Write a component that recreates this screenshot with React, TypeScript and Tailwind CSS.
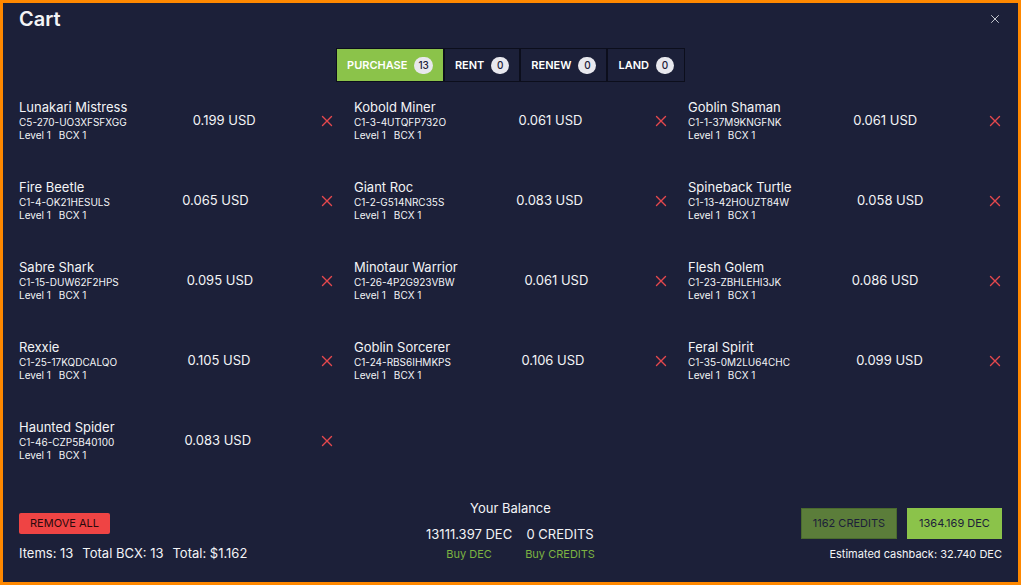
import React from 'react';
import { X } from 'lucide-react';

type CartItem = { name: string; uid: string; price: string };

const ITEMS: CartItem[] = [
  { name: 'Lunakari Mistress', uid: 'C5-270-UO3XFSFXGG', price: '0.199' },
  { name: 'Kobold Miner', uid: 'C1-3-4UTQFP732O', price: '0.061' },
  { name: 'Goblin Shaman', uid: 'C1-1-37M9KNGFNK', price: '0.061' },
  { name: 'Fire Beetle', uid: 'C1-4-OK21HESULS', price: '0.065' },
  { name: 'Giant Roc', uid: 'C1-2-G514NRC35S', price: '0.083' },
  { name: 'Spineback Turtle', uid: 'C1-13-42HOUZT84W', price: '0.058' },
  { name: 'Sabre Shark', uid: 'C1-15-DUW62F2HPS', price: '0.095' },
  { name: 'Minotaur Warrior', uid: 'C1-26-4P2G923VBW', price: '0.061' },
  { name: 'Flesh Golem', uid: 'C1-23-ZBHLEHI3JK', price: '0.086' },
  { name: 'Rexxie', uid: 'C1-25-17KQDCALQO', price: '0.105' },
  { name: 'Goblin Sorcerer', uid: 'C1-24-RBS6IHMKPS', price: '0.106' },
  { name: 'Feral Spirit', uid: 'C1-35-0M2LU64CHC', price: '0.099' },
  { name: 'Haunted Spider', uid: 'C1-46-CZP5B40100', price: '0.083' },
];

const TABS = [
  { label: 'PURCHASE', count: 13, active: true },
  { label: 'RENT', count: 0, active: false },
  { label: 'RENEW', count: 0, active: false },
  { label: 'LAND', count: 0, active: false },
];

const RemoveIcon = () => (
  <svg width="12" height="12" viewBox="0 0 12 12" className="mr-[1px] shrink-0">
    <path d="M1.5 1.5 L10.5 10.5 M10.5 1.5 L1.5 10.5" stroke="#e5484d" strokeWidth="1.4" strokeLinecap="round" />
  </svg>
);

export default function App() {
  return (
    <div
      className="w-[1021px] h-[585px] border-[3px] border-[#ff8800] bg-[#1c2039] text-[#f3f4f6] flex flex-col px-[16px] pt-[2px] pb-[20px]"
      style={{ fontFamily: 'Inter, "Noto Sans", sans-serif' }}
    >
      <div className="flex items-center justify-between h-[28px]">
        <h1 className="text-[20px] font-semibold leading-[28px]">Cart</h1>
        <button className="w-[14px] h-[14px] flex items-center justify-center text-gray-300">
          <X size={14} strokeWidth={1.6} />
        </button>
      </div>

      <div className="flex justify-center mt-[15px]">
        {TABS.map(tab => (
          <div
            key={tab.label}
            className={`h-[34px] flex items-center gap-[7px] px-[10px] border-[1.5px] border-[#0c0e1c] text-[11px] font-semibold ${tab.active ? 'bg-[#8bc34a] text-white' : 'bg-[#1c2039] text-white'}`}
          >
            <span>{tab.label}</span>
            <span className="min-w-[18px] h-[17px] px-[4px] rounded-full bg-[#e8e8ee] text-[#1c2039] text-[10px] font-medium flex items-center justify-center">
              {tab.count}
            </span>
          </div>
        ))}
      </div>

      <div className="grid grid-cols-[315px_314px_314px] gap-x-[20px] gap-y-[37px] mt-[17px]">
        {ITEMS.map(item => (
          <div key={item.uid} className="flex items-center justify-between h-[43px]">
            <div className="flex flex-col">
              <span className="text-[13px] leading-[17px]">{item.name}</span>
              <span className="text-[10px] leading-[13px]">{item.uid}</span>
              <span className="text-[10px] leading-[13px] flex gap-2">
                <span>Level 1</span>
                <span>BCX 1</span>
              </span>
            </div>
            <span className="text-[13px]">{item.price} USD</span>
            <RemoveIcon />
          </div>
        ))}
      </div>

      <div className="mt-auto flex items-end justify-between">
        <div className="flex flex-col items-start gap-[10px] w-[300px]">
          <button className="h-[21px] px-[11px] bg-[#ef4444] text-[#2a0a0c] text-[11px] rounded-[2px]">
            REMOVE ALL
          </button>
          <div className="text-[13px] leading-[18px] flex gap-[9px]">
            <span>Items: 13</span>
            <span>Total BCX: 13</span>
            <span>Total: $1.162</span>
          </div>
        </div>

        <div className="flex flex-col items-center">
          <span className="text-[13px] leading-[18px]">Your Balance</span>
          <div className="flex gap-[13px] mt-[8px]">
            <div className="flex flex-col items-center">
              <span className="text-[13px] leading-[18px]">13111.397 DEC</span>
              <span className="text-[11px] leading-[16px] mt-[3px] text-[#7cb342]">Buy DEC</span>
            </div>
            <div className="flex flex-col items-center">
              <span className="text-[13px] leading-[18px]">0 CREDITS</span>
              <span className="text-[11px] leading-[16px] mt-[3px] text-[#7cb342]">Buy CREDITS</span>
            </div>
          </div>
        </div>

        <div className="flex flex-col items-end w-[300px]">
          <div className="flex gap-[10px]">
            <button className="h-[31px] w-[96px] bg-[#5b7d3a] text-[#1c2039] text-[11px] border border-[#4a6a2e]">
              1162 CREDITS
            </button>
            <button className="h-[31px] w-[95px] bg-[#8bc34a] text-[#1c2039] text-[11px]">
              1364.169 DEC
            </button>
          </div>
          <span className="text-[11px] leading-[16px] mt-[7px]">Estimated cashback: 32.740 DEC</span>
        </div>
      </div>
    </div>
  );
}
